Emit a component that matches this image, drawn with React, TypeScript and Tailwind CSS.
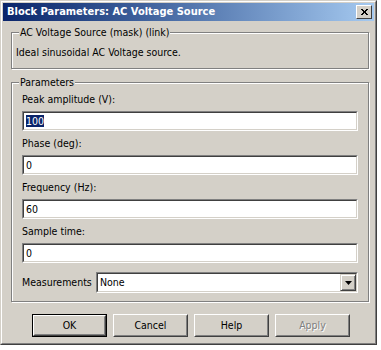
import React from 'react';

const FIELDS = [
  { label: 'Peak amplitude (V):', value: '100', selected: true },
  { label: 'Phase (deg):', value: '0' },
  { label: 'Frequency (Hz):', value: '60' },
  { label: 'Sample time:', value: '0' },
];

const BUTTONS = [
  { label: 'OK', isDefault: true },
  { label: 'Cancel' },
  { label: 'Help' },
  { label: 'Apply', disabled: true },
];

const font = { fontFamily: '"DejaVu Sans Condensed", "Liberation Sans", Arial, sans-serif' };

// sunken 2px edit border, classic win2k look
const sunken =
  'border border-t-[#808080] border-l-[#808080] border-r-white border-b-white';
const sunkenInner =
  'border border-t-[#404040] border-l-[#404040] border-r-[#d4d0c8] border-b-[#d4d0c8]';

const Group: React.FC<{ title: string; className?: string; children: React.ReactNode }> = ({
  title,
  className,
  children,
}) => (
  <div
    className={`relative border border-[#808080] shadow-[inset_1px_1px_0_#fff,1px_1px_0_#fff] ${className ?? ''}`}
  >
    <span className="absolute left-[7px] top-[-8px] bg-[#d4d0c8] px-[1px] text-[10.5px] leading-[14px] text-black">
      {title}
    </span>
    {children}
  </div>
);

const Field: React.FC<{ label: string; value: string; selected?: boolean }> = ({ label, value, selected }) => (
  <div className="flex flex-col">
    <div className="h-[14px] text-[10.5px] leading-[14px] text-black">{label}</div>
    <div className={`mt-[5px] mb-[5px] h-[20px] ${sunken}`}>
      <div className={`h-full bg-white px-[2px] text-[10.5px] leading-[16px] text-black ${sunkenInner}`}>
        {selected ? <span className="bg-[#0a246a] text-white">{value}</span> : value}
      </div>
    </div>
  </div>
);

const ButtonW: React.FC<{ label: string; isDefault?: boolean; disabled?: boolean }> = ({
  label,
  isDefault,
  disabled,
}) => (
  <div className={`h-[23px] w-[75px] ${isDefault ? 'border border-black' : ''}`}>
    <div className="h-full border border-t-white border-l-white border-r-[#404040] border-b-[#404040]">
      <div className="flex h-full items-center justify-center border border-transparent border-r-[#808080] border-b-[#808080] text-[10.5px]">
        {disabled ? (
          <span className="text-[#808080] [text-shadow:1px_1px_0_#fff]">{label}</span>
        ) : (
          <span className="text-black">{label}</span>
        )}
      </div>
    </div>
  </div>
);

export default function App() {
  return (
    <div className="h-[350px] w-[381px] bg-white" style={font}>
      <div className="h-[345px] w-[377px] border border-t-[#d4d0c8] border-l-[#d4d0c8] border-r-[#404040] border-b-[#404040] bg-[#d4d0c8]">
        <div className="flex h-full flex-col border border-t-white border-l-white border-r-[#808080] border-b-[#808080] p-[1px]">
          {/* title bar */}
          <div className="flex h-[18px] items-center justify-between bg-gradient-to-r from-[#0a246a] to-[#a6caf0] pl-[4px] pr-[2px]">
            <span className="text-[11px] font-bold leading-[18px] text-white">Block Parameters: AC Voltage Source</span>
            <div className="h-[14px] w-[16px] border border-t-white border-l-white border-r-[#404040] border-b-[#404040] bg-[#d4d0c8]">
              <svg width="14" height="12" viewBox="0 0 14 12" className="block">
                <path d="M4 3 L10 9 M5 3 L11 9 M10 3 L4 9 M11 3 L5 9" stroke="#000" strokeWidth="1" shapeRendering="crispEdges" />
              </svg>
            </div>
          </div>

          <div className="flex flex-col pl-[8px] pr-[5px]">
            <Group title="AC Voltage Source (mask) (link)" className="mt-[11px] h-[37px]">
              <div className="pl-[4px] pt-[12px] text-[10.5px] leading-[14px] text-black">
                Ideal sinusoidal AC Voltage source.
              </div>
            </Group>

            <Group title="Parameters" className="mt-[13px] h-[220px]">
              <div className="flex flex-col pl-[10px] pr-[10px] pt-[9px]">
                {FIELDS.map((f) => (
                  <Field key={f.label} {...f} />
                ))}
                <div className="mt-[4px] flex items-center">
                  <span className="w-[74px] text-[10.5px] text-black">Measurements</span>
                  <div className={`flex h-[21px] flex-1 ${sunken}`}>
                    <div className={`flex h-full flex-1 items-center bg-white ${sunkenInner}`}>
                      <span className="flex-1 pl-[2px] text-[10.5px] text-black">None</span>
                      <div className="flex h-[17px] w-[16px] items-center justify-center border border-t-[#d4d0c8] border-l-[#d4d0c8] border-r-[#404040] border-b-[#404040] bg-[#d4d0c8] shadow-[inset_1px_1px_0_#fff,inset_-1px_-1px_0_#808080]">
                        <svg width="7" height="4" viewBox="0 0 7 4" className="block">
                          <path d="M0 0 H7 L3.5 4 Z" fill="#000" />
                        </svg>
                      </div>
                    </div>
                  </div>
                </div>
              </div>
            </Group>

            <div className="mt-[12px] flex gap-[6px] pl-[21px]">
              {BUTTONS.map((b) => (
                <ButtonW key={b.label} {...b} />
              ))}
            </div>
          </div>
        </div>
      </div>
    </div>
  );
}
